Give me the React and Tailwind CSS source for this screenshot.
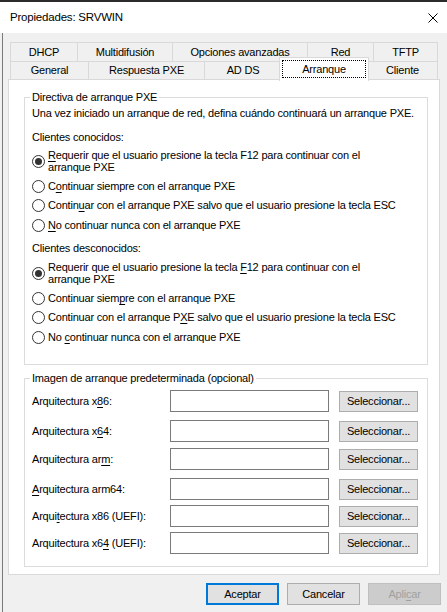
import React from "react";

const U = ({ children }) => (
  <span className="underline decoration-1 underline-offset-[2px]">{children}</span>
);

function Radio({ checked, children, two }) {
  return (
    <div className="flex items-center">
      <div className="w-[13px] h-[13px] rounded-full border border-[#333333] bg-white flex items-center justify-center shrink-0">
        {checked && <div className="w-[7px] h-[7px] rounded-full bg-[#333333]" />}
      </div>
      <div className={"whitespace-nowrap " + (two ? "ml-[3px] leading-[12px]" : "ml-[3px] leading-[16px]")}>{children}</div>
    </div>
  );
}

function Tab({ w, children, last }) {
  return (
    <div
      className={
        "h-full border-t border-l border-[#d9d9d9] flex items-center justify-center shrink-0 " +
        (last ? "border-r " : "")
      }
      style={{ width: w }}
    >
      {children}
    </div>
  );
}

function ArchRow({ label, mt }) {
  return (
    <div className={"flex items-center " + mt}>
      <div className="w-[138px] leading-[16px] whitespace-nowrap">{label}</div>
      <div className="w-[159px] h-[22px] border border-[#7a7a7a] bg-white" />
      <div className="ml-[10px] w-[79px] h-[21px] border border-[#adadad] bg-[#e1e1e1] flex items-center justify-center">
        Seleccionar...
      </div>
    </div>
  );
}

export default function App() {
  return (
    <div className="w-[447px] h-[612px] bg-[#f0f0f0] overflow-hidden flex flex-col text-[11px] tracking-[-0.2px] text-black font-['Liberation_Sans',Arial,sans-serif]">
      <div className="h-[2px] bg-[#2b2b2b] shrink-0" />
      <div className="h-[31px] bg-white flex items-center justify-between pl-[10px] pr-[9px] shrink-0">
        <span className="text-[11.5px]">Propiedades: SRVWIN</span>
        <svg width="10" height="10" viewBox="0 0 10 10">
          <path d="M0.5 0.5 L9.5 9.5 M9.5 0.5 L0.5 9.5" stroke="#000" strokeWidth="1" />
        </svg>
      </div>
      <div className="flex-1 ml-[2px] border-l border-[#7a7a7a] pl-[5px] pt-[9px] flex flex-col">
        {/* tabs */}
        <div className="ml-[2px] flex flex-col">
          <div className="flex h-[19px]">
            <Tab w={67}>DHCP</Tab>
            <Tab w={95}>Multidifusión</Tab>
            <Tab w={135}>Opciones avanzadas</Tab>
            <Tab w={66}>Red</Tab>
            <Tab w={65} last>TFTP</Tab>
          </div>
          <div className="flex h-[18px] items-start">
            <Tab w={78}>General</Tab>
            <Tab w={116}>Respuesta PXE</Tab>
            <Tab w={77}>AD DS</Tab>
            <div className="relative z-10 -ml-[2px] -mr-[2px] -mt-[4px] w-[90px] h-[24px] bg-white border-t border-l border-r border-[#d9d9d9] shrink-0">
              <div className="mx-[2px] mt-[2px] h-[18px] border border-dotted border-black flex items-center justify-center">
                Arranque
              </div>
            </div>
            <Tab w={71} last>Cliente</Tab>
          </div>
        </div>
        {/* panel */}
        <div className="w-[432px] h-[496px] bg-white border border-[#d9d9d9] px-[15px] shrink-0">
          <fieldset className="mt-[9px] border border-[#dcdcdc] w-[404px]">
            <legend className="ml-[5px] px-[2px] leading-[16px]">Directiva de arranque PXE</legend>
            <div className="pl-[7px] pb-[19px] flex flex-col">
              <div className="leading-[16px] whitespace-nowrap">
                Una vez iniciado un arranque de red, defina cuándo continuará un arranque PXE.
              </div>
              <div className="mt-[8px] leading-[16px]">Clientes conocidos:</div>
              <div className="mt-[4px]">
                <Radio checked two>
                  <U>R</U>equerir que el usuario presione la tecla F12 para continuar con el
                  <br />
                  arranque PXE
                </Radio>
              </div>
              <div className="mt-[5px]">
                <Radio>
                  C<U>o</U>ntinuar siempre con el arranque PXE
                </Radio>
              </div>
              <div className="mt-[3px]">
                <Radio>
                  Contin<U>u</U>ar con el arranque PXE salvo que el usuario presione la tecla ESC
                </Radio>
              </div>
              <div className="mt-[4px]">
                <Radio>
                  <U>N</U>o continuar nunca con el arranque PXE
                </Radio>
              </div>
              <div className="mt-[7px] leading-[16px]">Clientes desconocidos:</div>
              <div className="mt-[5px]">
                <Radio checked two>
                  Requerir que el usuario presione la tecla <U>F</U>12 para continuar con el
                  <br />
                  arranque PXE
                </Radio>
              </div>
              <div className="mt-[5px]">
                <Radio>
                  Continuar siem<U>p</U>re con el arranque PXE
                </Radio>
              </div>
              <div className="mt-[3px]">
                <Radio>
                  Continuar con el arranque P<U>X</U>E salvo que el usuario presione la tecla ESC
                </Radio>
              </div>
              <div className="mt-[4px]">
                <Radio>
                  No <U>c</U>ontinuar nunca con el arranque PXE
                </Radio>
              </div>
            </div>
          </fieldset>
          <fieldset className="mt-[5px] border border-[#dcdcdc] w-[404px]">
            <legend className="ml-[5px] px-[2px] leading-[16px]">
              Imagen de arranque predeterminada (opcional)
            </legend>
            <div className="pl-[7px] pb-[12px] flex flex-col">
              <ArchRow mt="mt-[4px]" label={<>Arquitectura x<U>8</U>6:</>} />
              <ArchRow mt="mt-[8px]" label={<>Arquitectura x<U>6</U>4:</>} />
              <ArchRow mt="mt-[6px]" label={<>Arquitectura ar<U>m</U>:</>} />
              <ArchRow mt="mt-[8px]" label={<><U>A</U>rquitectura arm64:</>} />
              <ArchRow mt="mt-[5px]" label={<>Arqui<U>t</U>ectura x86 (UEFI):</>} />
              <ArchRow mt="mt-[5px]" label={<>Arquitectura x6<U>4</U> (UEFI):</>} />
            </div>
          </fieldset>
        </div>
        {/* buttons */}
        <div className="mt-[8px] flex gap-[8px] pl-[198px]">
          <div className="w-[73px] h-[22px] border-2 border-[#0078d7] bg-[#e1e1e1] flex items-center justify-center">
            Aceptar
          </div>
          <div className="w-[73px] h-[22px] border border-[#adadad] bg-[#e1e1e1] flex items-center justify-center">
            Cancelar
          </div>
          <div className="w-[73px] h-[22px] border border-[#bfbfbf] bg-[#cccccc] flex items-center justify-center text-[#a0a0a0]">
            Apli<U>c</U>ar
          </div>
        </div>
      </div>
    </div>
  );
}
